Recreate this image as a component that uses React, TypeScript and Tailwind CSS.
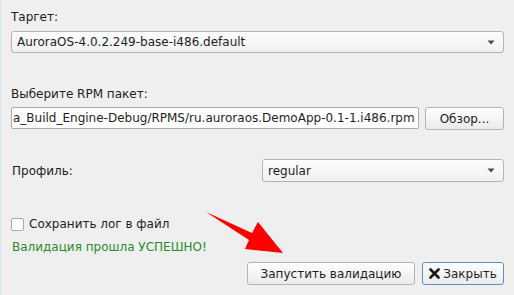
import React from "react";

const font = { fontFamily: '"DejaVu Sans", "Noto Sans", sans-serif' };

function Combo({ value, className = "" }: { value: string; className?: string }) {
  return (
    <div
      className={`flex h-[22px] items-center justify-between rounded-[3px] border border-[#b4b4b4] bg-gradient-to-b from-[#fdfdfd] to-[#f0f0f0] pl-[5px] pr-[8px] text-[12px] text-[#1e1e1e] ${className}`}
    >
      <span className="whitespace-nowrap">{value}</span>
      <svg width="8" height="5" viewBox="0 0 8 5">
        <path d="M0.5 0.5 L7.5 0.5 L4 4.5 Z" fill="#4a4a4a" />
      </svg>
    </div>
  );
}

function Btn({ children, className = "" }: { children: React.ReactNode; className?: string }) {
  return (
    <button
      type="button"
      className={`flex h-[23px] items-center justify-center rounded-[3px] border bg-gradient-to-b from-[#fefefe] to-[#ebebeb] text-[12px] text-[#1e1e1e] ${className}`}
    >
      {children}
    </button>
  );
}

export default function App() {
  return (
    <div
      className="relative flex h-[295px] w-[514px] flex-col overflow-hidden border-l border-[#d3e6f4] bg-[#efefef] pl-[10px] pr-[10px] pt-[9px] text-[12px] text-[#1e1e1e]"
      style={font}
    >
      <div className="h-[16px] leading-[16px]">Таргет:</div>
      <Combo value="AuroraOS-4.0.2.249-base-i486.default" className="mt-[6px]" />

      <div className="mt-[33px] h-[16px] leading-[16px]">Выберите RPM пакет:</div>
      <div className="mt-[5px] flex h-[22px] gap-[6px]">
        <div className="flex flex-1 items-center overflow-hidden rounded-[2px] border border-[#ababab] bg-white pl-[1px]">
          <span className="whitespace-nowrap">a_Build_Engine-Debug/RPMS/ru.auroraos.DemoApp-0.1-1.i486.rpm</span>
        </div>
        <Btn className="h-[22px] w-[79px] border-[#b4b4b4]">Обзор...</Btn>
      </div>

      <div className="mt-[30px] flex h-[23px] items-center">
        <div className="w-[251px] pl-[1px]">Профиль:</div>
        <Combo value="regular" className="h-[23px] flex-1" />
      </div>

      <div className="mt-[34px] flex h-[16px] items-center gap-[5px]">
        <div className="h-[13px] w-[13px] rounded-[2px] border border-[#ababab] bg-white" />
        <span>Сохранить лог в файл</span>
      </div>

      <div className="mt-[7px] h-[16px] pl-[1px] leading-[16px] text-[#2a8a2a]">Валидация прошла УСПЕШНО!</div>

      <div className="mt-[7px] flex justify-end gap-[7px]">
        <Btn className="w-[168px] border-[#b4b4b4]">Запустить валидацию</Btn>
        <Btn className="w-[82px] gap-[3px] border-[#5e8fbd]">
          <svg width="11" height="11" viewBox="0 0 11 11">
            <path d="M1.5 1.5 L9.5 9.5 M9.5 1.5 L1.5 9.5" stroke="#1a1a1a" strokeWidth="2.6" strokeLinecap="round" />
          </svg>
          <span>Закрыть</span>
        </Btn>
      </div>

      <svg className="pointer-events-none absolute left-0 top-0" width="514" height="295" viewBox="0 0 514 295">
        <polygon points="205,212 251,233 257,222 282,253 244,249 248,240" fill="#ff0000" />
      </svg>
    </div>
  );
}
